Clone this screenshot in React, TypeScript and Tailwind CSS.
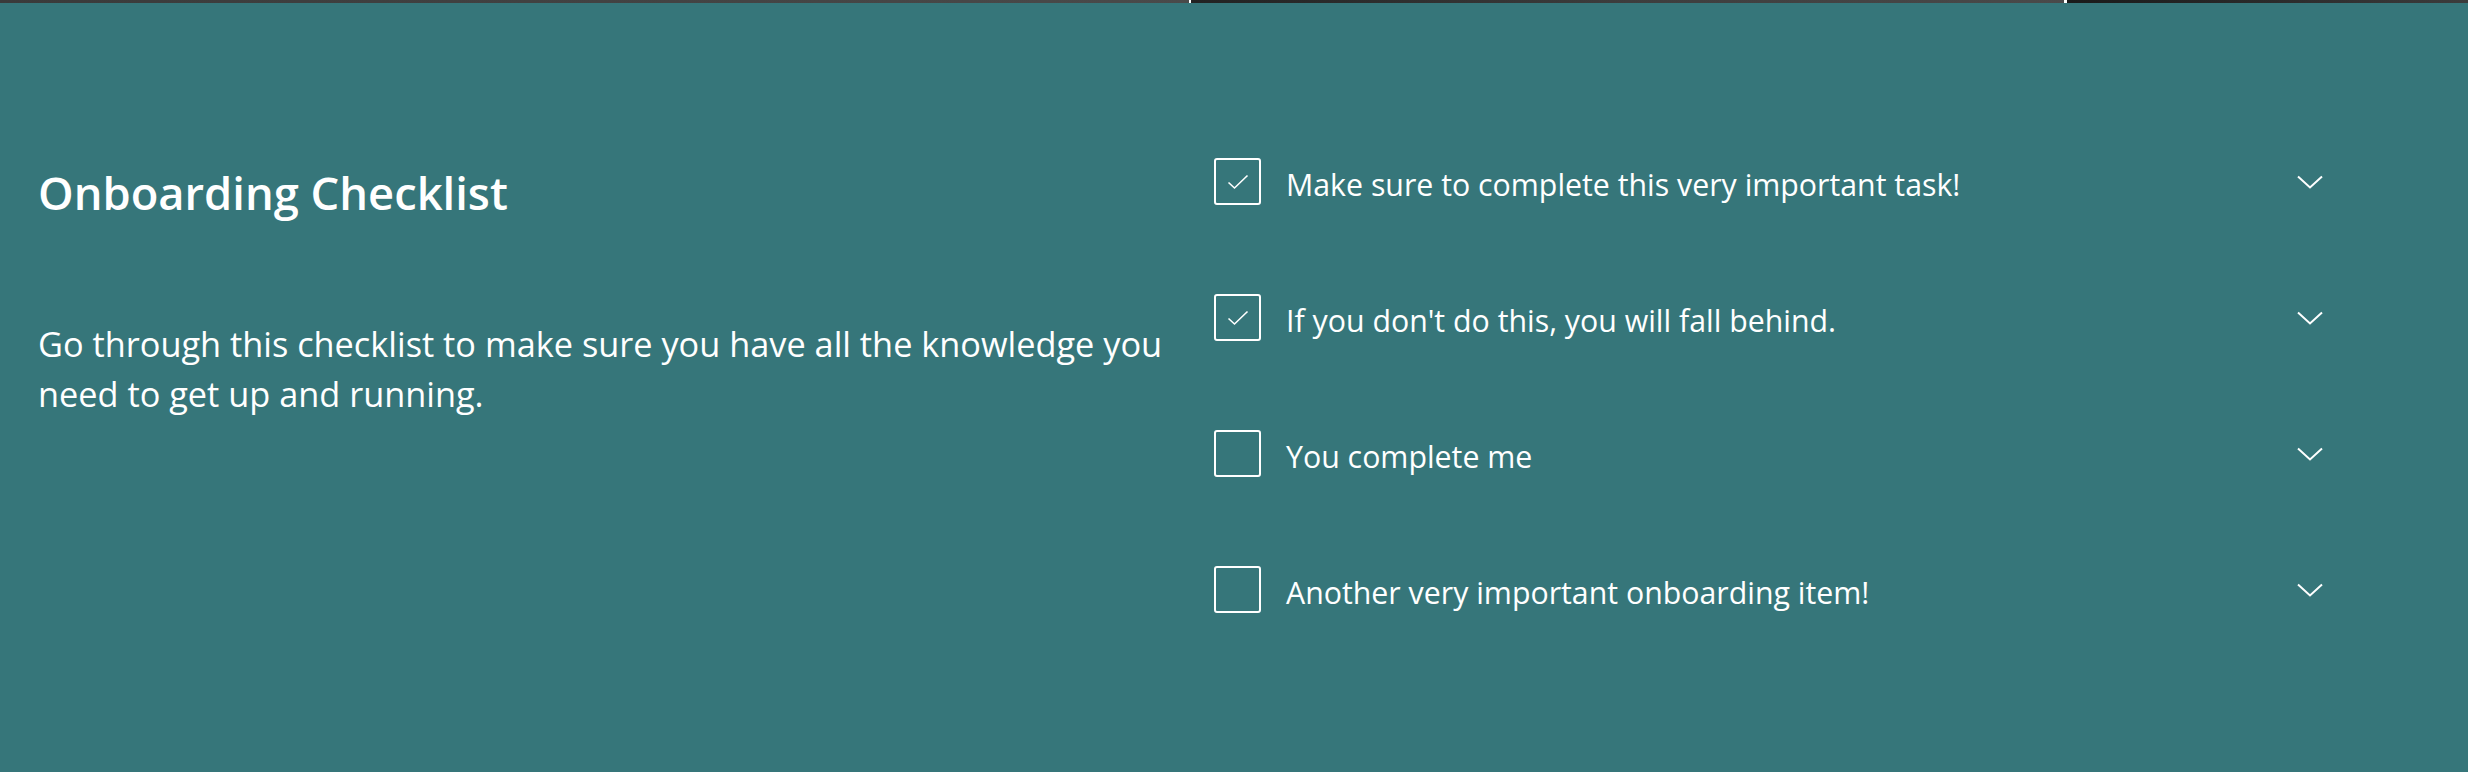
interface ChecklistItem {
  id: number
  title: string
  done: boolean
}

const items: ChecklistItem[] = [
  { id: 1, title: 'Make sure to complete this very important task!', done: true },
  { id: 2, title: "If you don't do this, you will fall behind.", done: true },
  { id: 3, title: 'You complete me', done: false },
  { id: 4, title: 'Another very important onboarding item!', done: false },
]

function CheckBox({ checked }: { checked: boolean }) {
  return (
    <span className="flex h-[47px] w-[47px] shrink-0 items-center justify-center rounded-[3px] border-2 border-white">
      {checked && (
        <svg width="22" height="16" viewBox="0 0 22 16" fill="none">
          <path d="M1.5 8.5 L7.5 14 L20.5 1.5" stroke="white" strokeWidth="1.6" />
        </svg>
      )}
    </span>
  )
}

function Chevron() {
  return (
    <svg width="26" height="14" viewBox="0 0 26 14" fill="none" className="mr-[-1px]">
      <path d="M1 1.5 L13 12.5 L25 1.5" stroke="white" strokeWidth="2" />
    </svg>
  )
}

export default function App() {
  return (
    <div className="min-h-screen w-full bg-[#36767a] font-['Open_Sans',sans-serif] text-white">
      {/* bottom edge of the section above */}
      <div className="flex h-[3px] w-full">
        <div className="w-[1189px] bg-gradient-to-r from-[#3a3a3a] to-[#4a4a4a]" />
        <div className="w-[2px] bg-white" />
        <div className="w-[873px] bg-gradient-to-r from-[#222] via-[#3d3d3d] to-[#4a4a4a]" />
        <div className="w-[3px] bg-white" />
        <div className="flex-1 bg-gradient-to-r from-[#1a1a1a] to-[#3c3c3c]" />
      </div>

      <div className="flex pl-[38px]">
        <div className="w-[1150px] pt-[163px]">
          <h2 className="text-[45.3px] font-semibold leading-[54px]">Onboarding Checklist</h2>
          <p className="mt-[99px] text-[34.3px] leading-[50px]">
            Go through this checklist to make sure you have all the knowledge you need to get up and running.
          </p>
        </div>

        <ul className="flex-1 pt-[155px] pl-[26px] pr-[146px]">
          {items.map((item) => (
            <li key={item.id} className="mb-[89px] flex h-[47px] items-center">
              <CheckBox checked={item.done} />
              <span className="ml-[25px] flex-1 pt-[6px] text-[30.3px]">{item.title}</span>
              <Chevron />
            </li>
          ))}
        </ul>
      </div>
    </div>
  )
}
